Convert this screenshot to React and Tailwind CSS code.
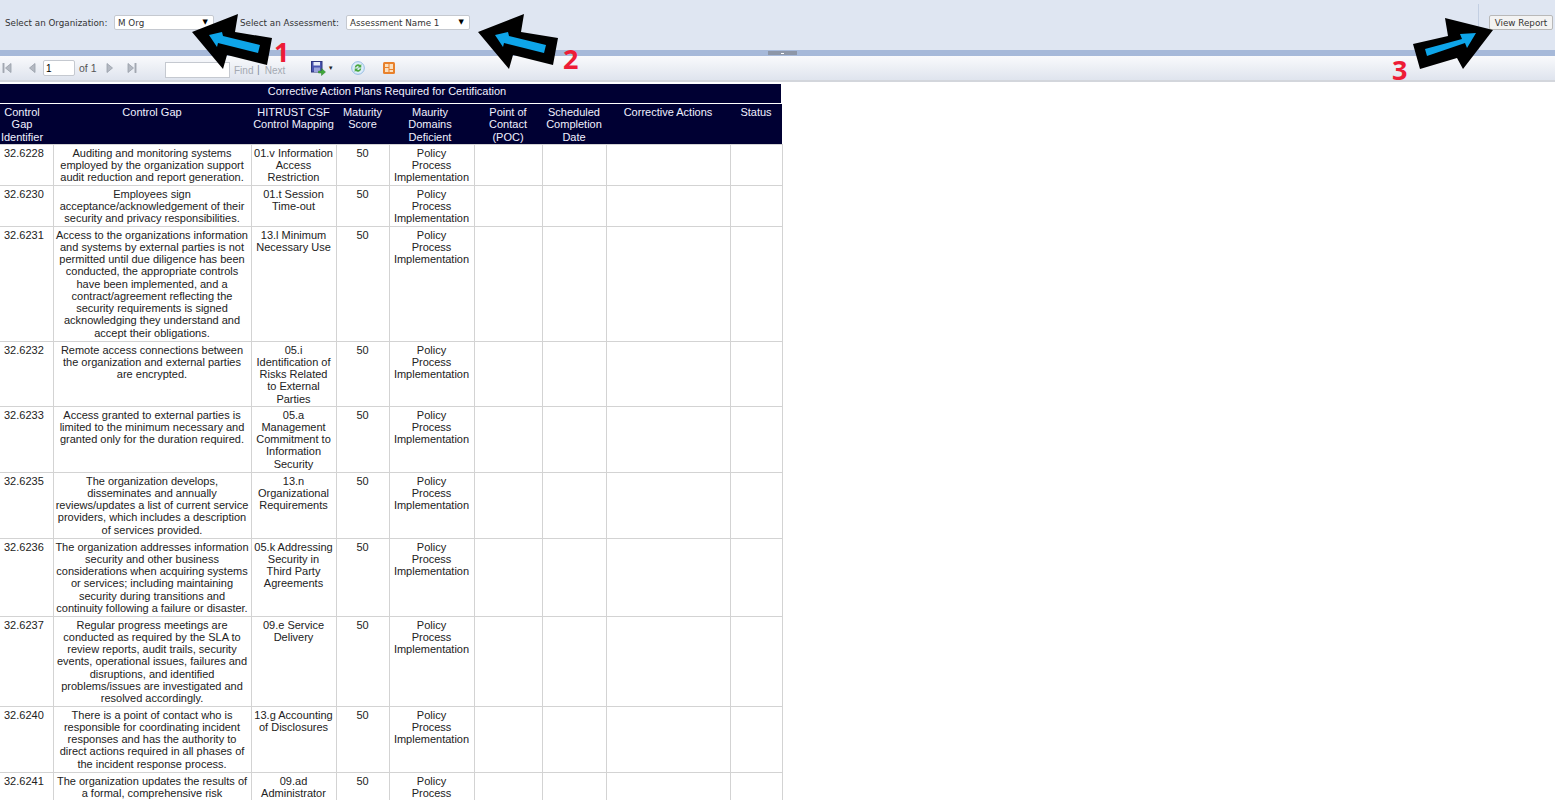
import React from "react";

const rows = [
  { id: "32.6228", gap: "Auditing and monitoring systems\nemployed by the organization support\naudit reduction and report generation.", map: "01.v Information\nAccess\nRestriction", h: "h-[41px]" },
  { id: "32.6230", gap: "Employees sign\nacceptance/acknowledgement of their\nsecurity and privacy responsibilities.", map: "01.t Session\nTime-out", h: "h-[41px]" },
  { id: "32.6231", gap: "Access to the organizations information\nand systems by external parties is not\npermitted until due diligence has been\nconducted, the appropriate controls\nhave been implemented, and a\ncontract/agreement reflecting the\nsecurity requirements is signed\nacknowledging they understand and\naccept their obligations.", map: "13.l Minimum\nNecessary Use", h: "h-[115px]" },
  { id: "32.6232", gap: "Remote access connections between\nthe organization and external parties\nare encrypted.", map: "05.i\nIdentification of\nRisks Related\nto External\nParties", h: "h-[65px]" },
  { id: "32.6233", gap: "Access granted to external parties is\nlimited to the minimum necessary and\ngranted only for the duration required.", map: "05.a\nManagement\nCommitment to\nInformation\nSecurity", h: "h-[66px]" },
  { id: "32.6235", gap: "The organization develops,\ndisseminates and annually\nreviews/updates a list of current service\nproviders, which includes a description\nof services provided.", map: "13.n\nOrganizational\nRequirements", h: "h-[66px]" },
  { id: "32.6236", gap: "The organization addresses information\nsecurity and other business\nconsiderations when acquiring systems\nor services; including maintaining\nsecurity during transitions and\ncontinuity following a failure or disaster.", map: "05.k Addressing\nSecurity in\nThird Party\nAgreements", h: "h-[78px]" },
  { id: "32.6237", gap: "Regular progress meetings are\nconducted as required by the SLA to\nreview reports, audit trails, security\nevents, operational issues, failures and\ndisruptions, and identified\nproblems/issues are investigated and\nresolved accordingly.", map: "09.e Service\nDelivery", h: "h-[90px]" },
  { id: "32.6240", gap: "There is a point of contact who is\nresponsible for coordinating incident\nresponses and has the authority to\ndirect actions required in all phases of\nthe incident response process.", map: "13.g Accounting\nof Disclosures", h: "h-[66px]" },
  { id: "32.6241", gap: "The organization updates the results of\na formal, comprehensive risk", map: "09.ad\nAdministrator", h: "h-[66px]" },
];

const headers = [
  { label: "Control\nGap\nIdentifier", cls: "pr-[9px]" },
  { label: "Control Gap" },
  { label: "HITRUST CSF\nControl Mapping" },
  { label: "Maturity\nScore" },
  { label: "Maurity\nDomains\nDeficient", cls: "pr-[3px]" },
  { label: "Point of\nContact\n(POC)" },
  { label: "Scheduled\nCompletion\nDate" },
  { label: "Corrective Actions" },
  { label: "Status" },
];

const SelectBox = ({ value, width }) => (
  <div className={`flex items-center justify-between h-[15px] bg-white border border-[#c5c9d0] rounded-[2px] pl-[3px] pr-[5px] ${width}`}>
    <span className="pt-[2px]">{value}</span>
    <span className="text-[7px] leading-none text-black">▼</span>
  </div>
);

const NavIcon = ({ dir, bar }) => (
  <svg width="12" height="12" viewBox="0 0 12 12" className="shrink-0">
    <g fill="#b4b9c2" stroke="#989ea8" strokeWidth="0.8">
      {dir === "left" ? <path d="M9 1.500V10.500L3.500 6Z" /> : <path d="M3 1.500V10.500L8.500 6Z" />}
      {bar && (dir === "left" ? <rect x="1" y="1.500" width="1" height="9" /> : <rect x="10" y="1.500" width="1" height="9" />)}
    </g>
  </svg>
);

const SaveIcon = () => (
  <svg width="15" height="15" viewBox="0 0 15 15">
    <rect x="0.500" y="0.500" width="10.500" height="10.500" fill="#4a55b0" stroke="#2f3780" />
    <rect x="2.500" y="1" width="6.500" height="3.500" fill="#e8ecf8" />
    <rect x="3" y="6.500" width="6" height="4.500" fill="#9aa3da" />
    <path d="M7.500 10h3V7.500l4 3.500-4 3.500V12h-3Z" fill="#3fa83a" stroke="#2a7d28" strokeWidth="0.500" />
  </svg>
);

const RefreshIcon = () => (
  <svg width="14" height="14" viewBox="0 0 15 15">
    <circle cx="7.500" cy="7.500" r="6.800" fill="#dcecfa" stroke="#8fb8e2" />
    <path d="M4 7a3.600 3.600 0 0 1 6-2.500L11 3v4H7l1.500-1.300A2.200 2.200 0 0 0 5.500 7Z" fill="#4aa83f" />
    <path d="M11 8a3.600 3.600 0 0 1-6 2.500L4 12V8h4L6.500 9.300A2.200 2.200 0 0 0 9.500 8Z" fill="#4aa83f" />
  </svg>
);

const LayoutIcon = () => (
  <svg width="12" height="12" viewBox="0 0 12 12">
    <rect width="12" height="12" rx="1.500" fill="#e8812c" />
    <rect x="2" y="2" width="3.500" height="3" fill="#fbe0bf" />
    <rect x="6.500" y="2" width="3.500" height="5" fill="#fbe0bf" />
    <rect x="2" y="6" width="3.500" height="4" fill="#fbe0bf" />
    <rect x="6.500" y="8" width="3.500" height="2" fill="#fbe0bf" />
  </svg>
);

// arrows and numbers were drawn on top of the screenshot
const LeftArrow = ({ className }) => (
  <svg width="84" height="58" viewBox="0 0 84 58" className={`absolute ${className}`}>
    <path d="M0 18 46 0 43 18 80 24 75 51 35 41 31 55Z" fill="#000" />
    <path d="M17 21 30 18 31 22 68 31 66 39 26 29 25 33Z" fill="#0ea5e9" />
  </svg>
);

const RightArrow = ({ className }) => (
  <svg width="84" height="56" viewBox="0 0 84 56" className={`absolute ${className}`}>
    <path d="M80 17 32 5 35 23 0 31 7 56 44 45 50 56Z" fill="#000" />
    <path d="M12 36 49 26 47 21 63 20 54 35 52 30 14 43Z" fill="#0ea5e9" />
  </svg>
);

const Callout = ({ n, className }) => (
  <span className={`absolute font-['Open_Sans',sans-serif] font-bold text-[27px] leading-none text-[#ed1c36] ${className}`}>{n}</span>
);

export default function App() {
  return (
    <div className="relative h-[803px] w-[1555px] overflow-hidden bg-white font-['Liberation_Sans',Arial,sans-serif] text-[11px] text-[#222]">
      {/* parameter bar */}
      <div className="flex h-[50px] bg-[#dfe6f2] font-['DejaVu_Sans',sans-serif] text-[8.750px] text-[#333]">
        <div className="flex flex-1 items-start pt-[15px] pl-[5px] whitespace-nowrap">
          <span className="w-[109px] leading-[17px]">Select an Organization:</span>
          <SelectBox value="M Org" width="w-[100px]" />
          <span className="ml-[26px] w-[106px] leading-[17px]">Select an Assessment:</span>
          <SelectBox value="Assessment Name 1" width="w-[124px]" />
        </div>
        <div className="mt-[4px] w-px bg-[#c3cfe2]" />
        <div className="flex w-[76px] items-start justify-end pt-[15px] pr-[2px]">
          <button className="h-[15px] w-[64px] rounded-[2px] border border-[#b9b9b9] bg-[#f3f3f3] pt-px leading-none text-[#333]">View Report</button>
        </div>
      </div>

      {/* splitter */}
      <div className="flex h-[6px] justify-center bg-[#a6b9d9] pl-[9px]">
        <div className="mt-[1px] flex h-[4px] w-[29px] items-center justify-center bg-[#8d97a8]">
          <div className="h-px w-[3px] bg-white" />
        </div>
      </div>

      {/* report toolbar */}
      <div className="flex h-[26px] items-center border-b-2 border-[#d3d6dc] bg-gradient-to-b from-[#f9fafc] via-[#eceff5] to-[#dfe4ee] pl-[2px] text-[10.500px]">
        <NavIcon dir="left" bar />
        <div className="ml-[12px]"><NavIcon dir="left" /></div>
        <input readOnly value="1" className="ml-[5px] h-[16px] w-[32px] rounded-[2px] border border-[#c5c9d0] bg-white pl-[2px] text-[10px] text-black" />
        <span className="ml-[4px] mt-px w-[18px] whitespace-nowrap text-[#555]">of 1</span>
        <div className="ml-[7px]"><NavIcon dir="right" /></div>
        <div className="ml-[9px]"><NavIcon dir="right" bar /></div>
        <div className="ml-[28px] mt-[3px] h-[16px] w-[65px] border border-[#c5c9d0] bg-white" />
        <span className="ml-[4px] mt-[4px] w-[18px] text-[10px] text-[#a4a9b2]">Find</span>
        <span className="ml-[5px] mt-[4px] text-[#7d8ba0]">|</span>
        <span className="ml-[5px] mt-[4px] w-[21px] text-[10px] text-[#a4a9b2]">Next</span>
        <div className="ml-[25px]"><SaveIcon /></div>
        <span className="ml-[2px] text-[6px] text-[#222]">▼</span>
        <div className="ml-[17px]"><RefreshIcon /></div>
        <div className="ml-[18px]"><LayoutIcon /></div>
      </div>

      {/* report body */}
      <div className="h-[718px] overflow-hidden pt-[2px]">
        <div className="h-[19px] w-[781px] bg-[#000033] pr-[7px] text-center leading-[15px] text-[#f0f0ff]">
          Corrective Action Plans Required for Certification
        </div>
        <table className="mt-px w-[782px] table-fixed border-collapse text-center leading-[12.250px]">
          <colgroup>
            <col className="w-[53px]" />
            <col className="w-[198px]" />
            <col className="w-[85px]" />
            <col className="w-[53px]" />
            <col className="w-[85px]" />
            <col className="w-[68px]" />
            <col className="w-[64px]" />
            <col className="w-[124px]" />
            <col className="w-[52px]" />
          </colgroup>
          <thead>
            <tr className="h-[40px] bg-[#000033] text-[#f0f0ff]">
              {headers.map((h) => (
                <th key={h.label} className={`whitespace-pre-line p-0 pt-[2px] align-top font-normal ${h.cls || ""}`}>{h.label}</th>
              ))}
            </tr>
          </thead>
          <tbody>
            {rows.map((r) => (
              <tr key={r.id} className={`${r.h} align-top`}>
                <td className="border border-l-0 border-[#d3d3d3] pt-[2px] pl-[4px] text-left">{r.id}</td>
                <td className="whitespace-pre-line border border-[#d3d3d3] pt-[2px]">{r.gap}</td>
                <td className="whitespace-pre-line border border-[#d3d3d3] pt-[2px]">{r.map}</td>
                <td className="border border-[#d3d3d3] pt-[2px]">50</td>
                <td className="whitespace-pre-line border border-[#d3d3d3] pt-[2px]">{"Policy\nProcess\nImplementation"}</td>
                <td className="border border-[#d3d3d3]" />
                <td className="border border-[#d3d3d3]" />
                <td className="border border-[#d3d3d3]" />
                <td className="border border-[#d3d3d3]" />
              </tr>
            ))}
          </tbody>
        </table>
      </div>

      <LeftArrow className="left-[192px] top-[14px]" />
      <LeftArrow className="left-[478px] top-[14px]" />
      <RightArrow className="left-[1413px] top-[13px]" />
      <Callout n="1" className="left-[274px] top-[38px]" />
      <Callout n="2" className="left-[563px] top-[45px]" />
      <Callout n="3" className="left-[1392px] top-[56px]" />
    </div>
  );
}
